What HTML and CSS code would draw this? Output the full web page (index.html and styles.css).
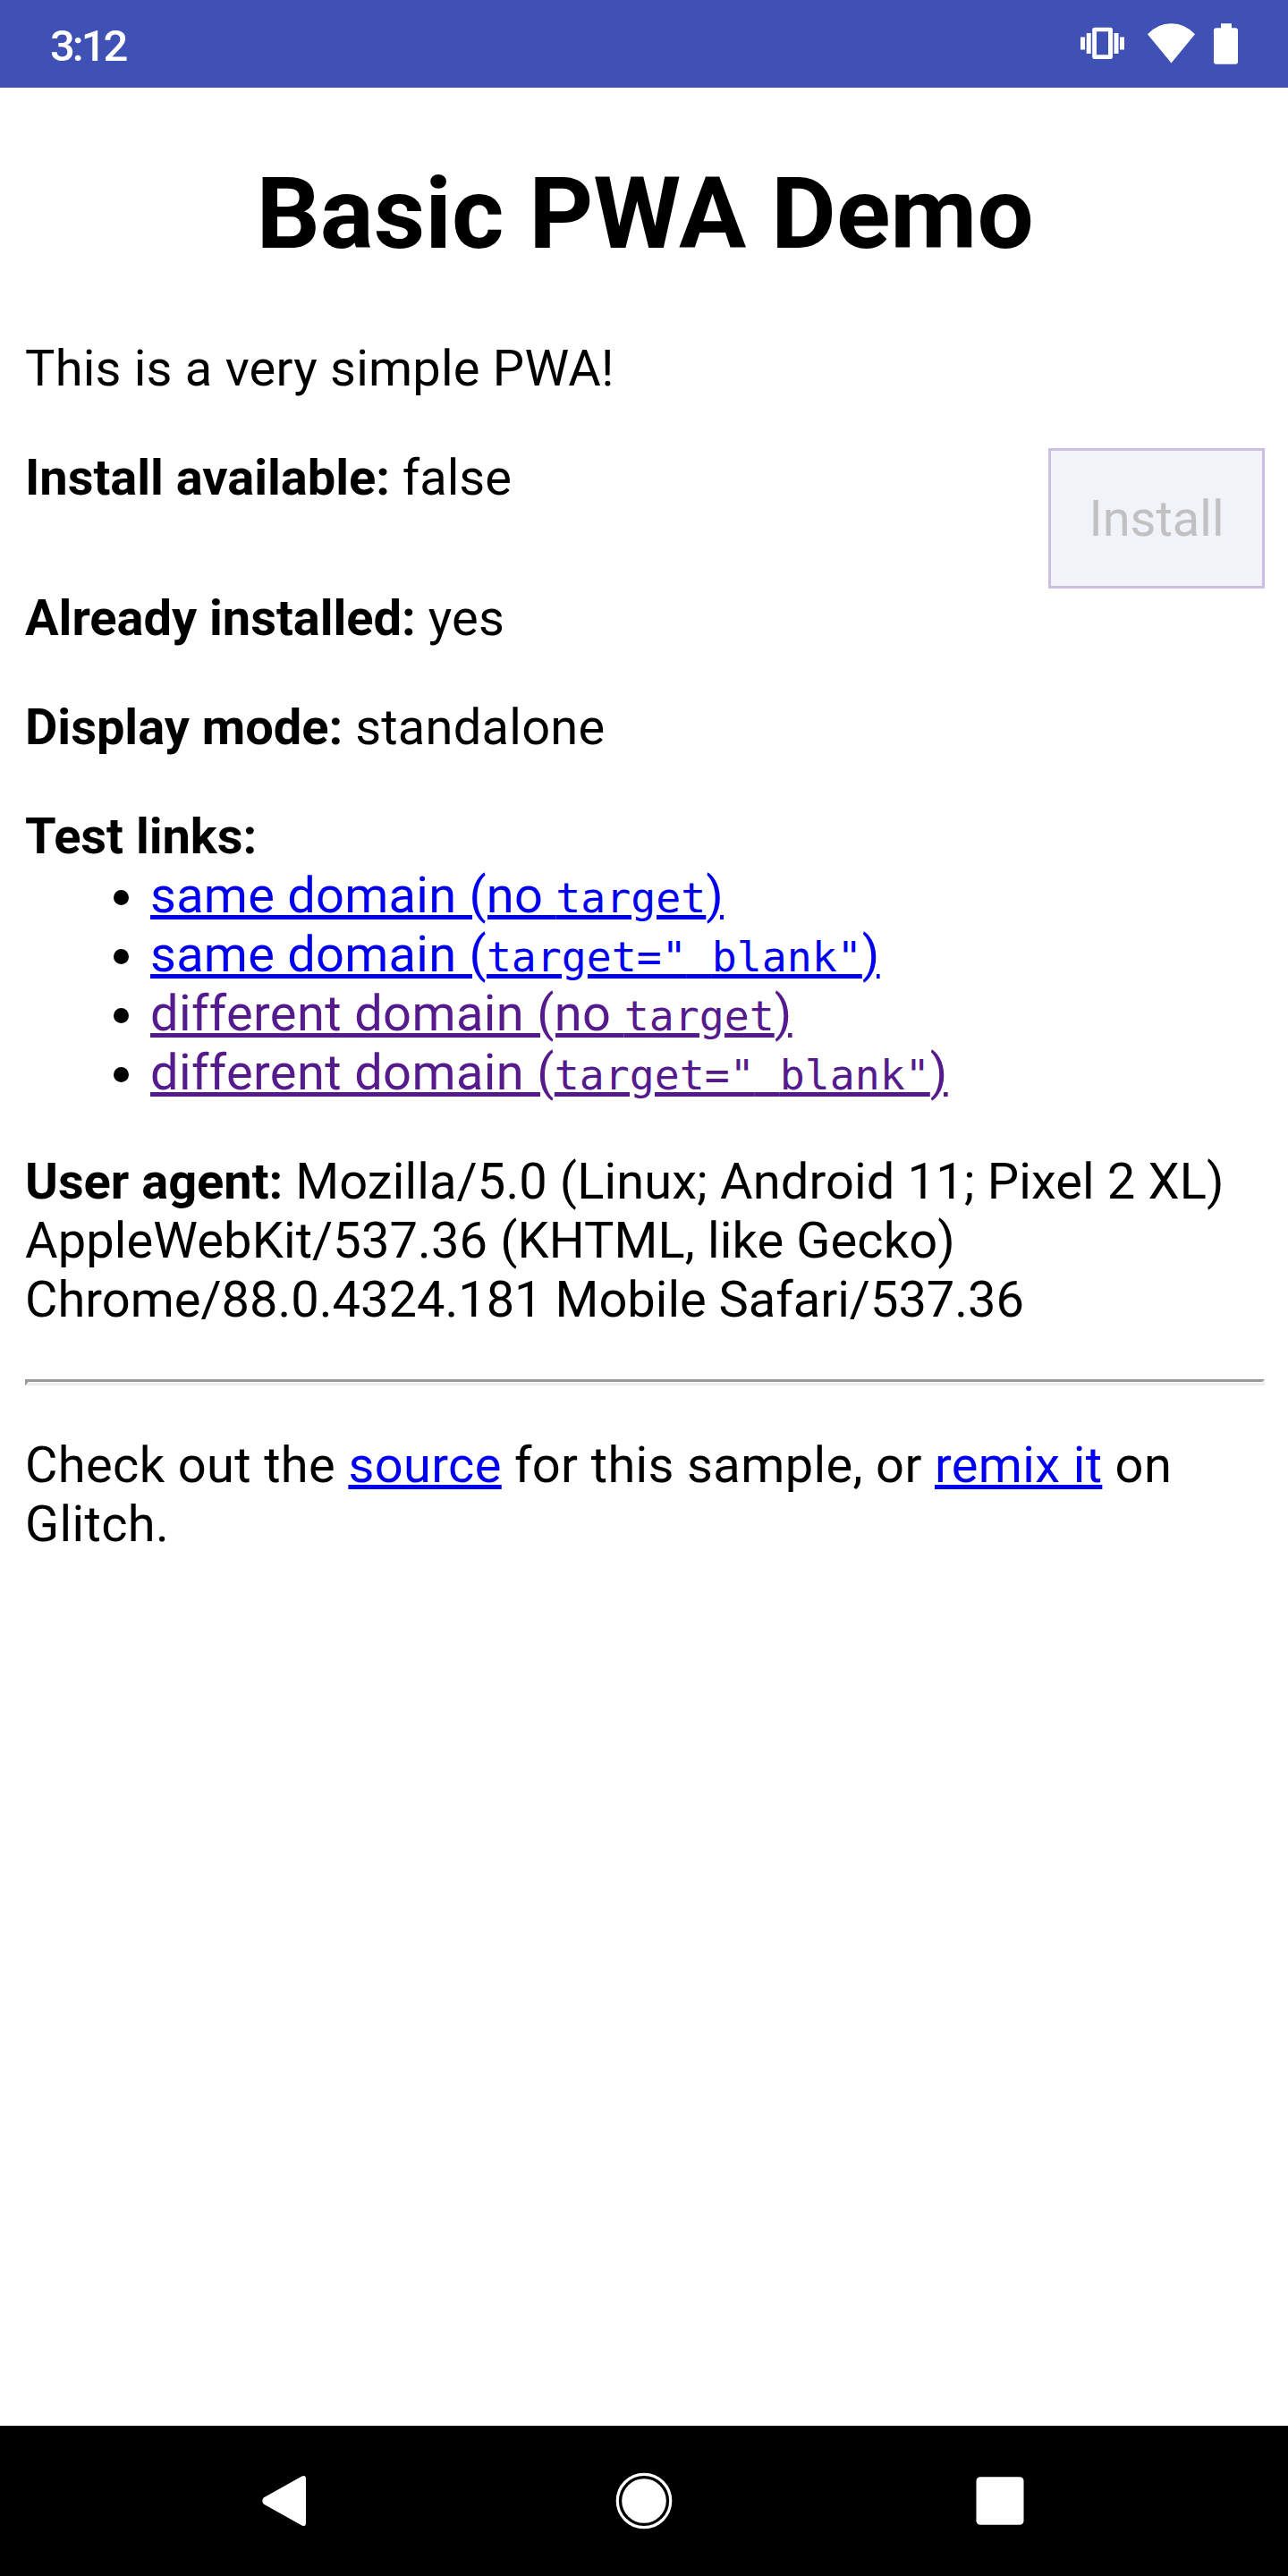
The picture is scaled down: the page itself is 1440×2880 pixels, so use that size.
FILE: index.html
```html
<!DOCTYPE html>
<html lang="en">
<head>
<meta charset="utf-8">
<title>Basic PWA Demo</title>
<link rel="stylesheet" href="styles.css">
</head>
<body>
<header class="status">
  <span class="time">3:12</span>
  <svg class="status-icons" width="180" height="60" viewBox="1208 20 180 60" fill="#fff">
    <rect x="1208" y="41.5" width="5" height="14"/>
    <rect x="1214.7" y="37" width="5" height="23"/>
    <path fill-rule="evenodd" d="M1224 30.7h17.200a2.800 2.800 0 0 1 2.800 2.800v29.700a2.800 2.800 0 0 1 -2.800 2.800h-17.200a2.800 2.800 0 0 1 -2.800 -2.800v-29.700a2.800 2.800 0 0 1 2.800 -2.800zM1226 35.300v26h13v-26z"/>
    <rect x="1245.500" y="37" width="5" height="23"/>
    <rect x="1252" y="41.500" width="5" height="14"/>
    <path d="M1283 38.300Q1294 26.200 1309.500 26.200T1336 38.300L1309.500 70.500z"/>
    <path d="M1365 26.200h12v5h4.300a2.700 2.700 0 0 1 2.700 2.700v35.200a2.700 2.700 0 0 1 -2.700 2.700h-21.600a2.700 2.700 0 0 1 -2.700 -2.700v-35.200a2.700 2.700 0 0 1 2.700 -2.700h5.300z"/>
  </svg>
</header>
<main class="page">
  <h1 class="title">Basic PWA Demo</h1>
  <p class="text intro">This is a very simple PWA!</p>
  <div class="install-row">
    <div><strong>Install available:</strong> <span>false</span></div>
    <button class="install" disabled>Install</button>
  </div>
  <p class="text"><strong>Already installed:</strong> <span class="mode">yes</span></p>
  <p class="text"><strong>Display mode:</strong> <span class="mode">standalone</span></p>
  <div class="text">
    <strong>Test links:</strong>
    <ul class="links">
      <li><a href="#">same domain (no <code>target</code>)</a></li>
      <li><a href="#">same domain (<code>target="<span class="underscore">_</span>blank"</code>)</a></li>
      <li><a class="visited" href="#">different domain (no <code>target</code>)</a></li>
      <li><a class="visited" href="#">different domain (<code>target="<span class="underscore">_</span>blank"</code>)</a></li>
    </ul>
  </div>
  <p class="text"><strong>User agent:</strong> <span class="agent">Mozilla/5.0 (Linux; Android 11; Pixel 2 XL) AppleWebKit/537.36 (KHTML, like Gecko)</span> Chrome/88.0.4324.181 Mobile Safari/537.36</p>
  <hr class="rule">
  <p class="text footer">Check out the <a href="#">source</a> for this sample, or <a href="#">remix it</a> on Glitch.</p>
</main>
<nav class="navbar">
  <svg width="60" height="60" viewBox="290 2766 60 60"><path fill="#fff" d="M294.600 2792.600L337.500 2768.600Q342 2766.500 342 2771.500V2820.500Q342 2825.500 337.500 2823.400L294.600 2799.400Q292 2796 294.600 2792.600z"/></svg>
  <svg width="66" height="66" viewBox="-33 -33 66 66"><circle r="29.700" fill="none" stroke="#fff" stroke-width="3.200"/><circle r="24.800" fill="#fff"/></svg>
  <svg width="60" height="60" viewBox="-28 -30 60 60"><rect x="-26.500" y="-26.800" width="53" height="53.500" rx="4.500" fill="#fff"/></svg>
</nav>
</body>
</html>
```
FILE: styles.css
```css
* { box-sizing: border-box; }
body {
  margin: 0;
  width: 1440px;
  height: 2880px;
  display: flex;
  flex-direction: column;
  background: #fff;
  color: #000;
  font: 56px/66px Roboto, sans-serif;
}
.status {
  flex: none;
  height: 98px;
  padding: 0 52px 0 56px;
  display: flex;
  align-items: center;
  justify-content: space-between;
  background: #3f51b5;
}
.time { color: #fff; font: 500 49px/60px Roboto, sans-serif; letter-spacing: -3px; padding-top: 5px; }
.status-icons { display: block; margin-top: 2px; }
.page { flex: 1; padding: 75px 26px 0 28px; }
.title { margin: 0 0 75px; font-size: 112px; line-height: 131px; font-weight: 700; text-align: center; }
.text { margin: 0 0 56px; }
.intro { letter-spacing: 0.22px; }
.mode { letter-spacing: 0.25px; }
.agent { letter-spacing: 0.12px; }
.footer { letter-spacing: 0.36px; }
strong { font-weight: 700; letter-spacing: -0.03px; }
.install-row { display: flex; justify-content: space-between; align-items: flex-start; }
.install {
  width: 242px;
  height: 157px;
  padding: 0;
  border: 3px solid #ccc0e2;
  background: #f2f3f9;
  color: #c1c1c1;
  font: inherit;
}
.links { margin: 0; padding-left: 140px; letter-spacing: 0.24px; }
a { color: #00e; text-decoration: underline 5px; }
.visited { color: #551a8b; letter-spacing: 0.37px; }
code { font: 46.5px/1 "DejaVu Sans Mono", monospace; letter-spacing: 0; }
.underscore { vertical-align: 4px; text-decoration-skip-ink: none; }
.rule { margin: 0 0 56px; height: 7px; border: 3px inset #eee; }
.navbar {
  flex: none;
  height: 168px;
  padding: 0 290px;
  display: flex;
  align-items: center;
  justify-content: space-between;
  background: #000;
}
```
